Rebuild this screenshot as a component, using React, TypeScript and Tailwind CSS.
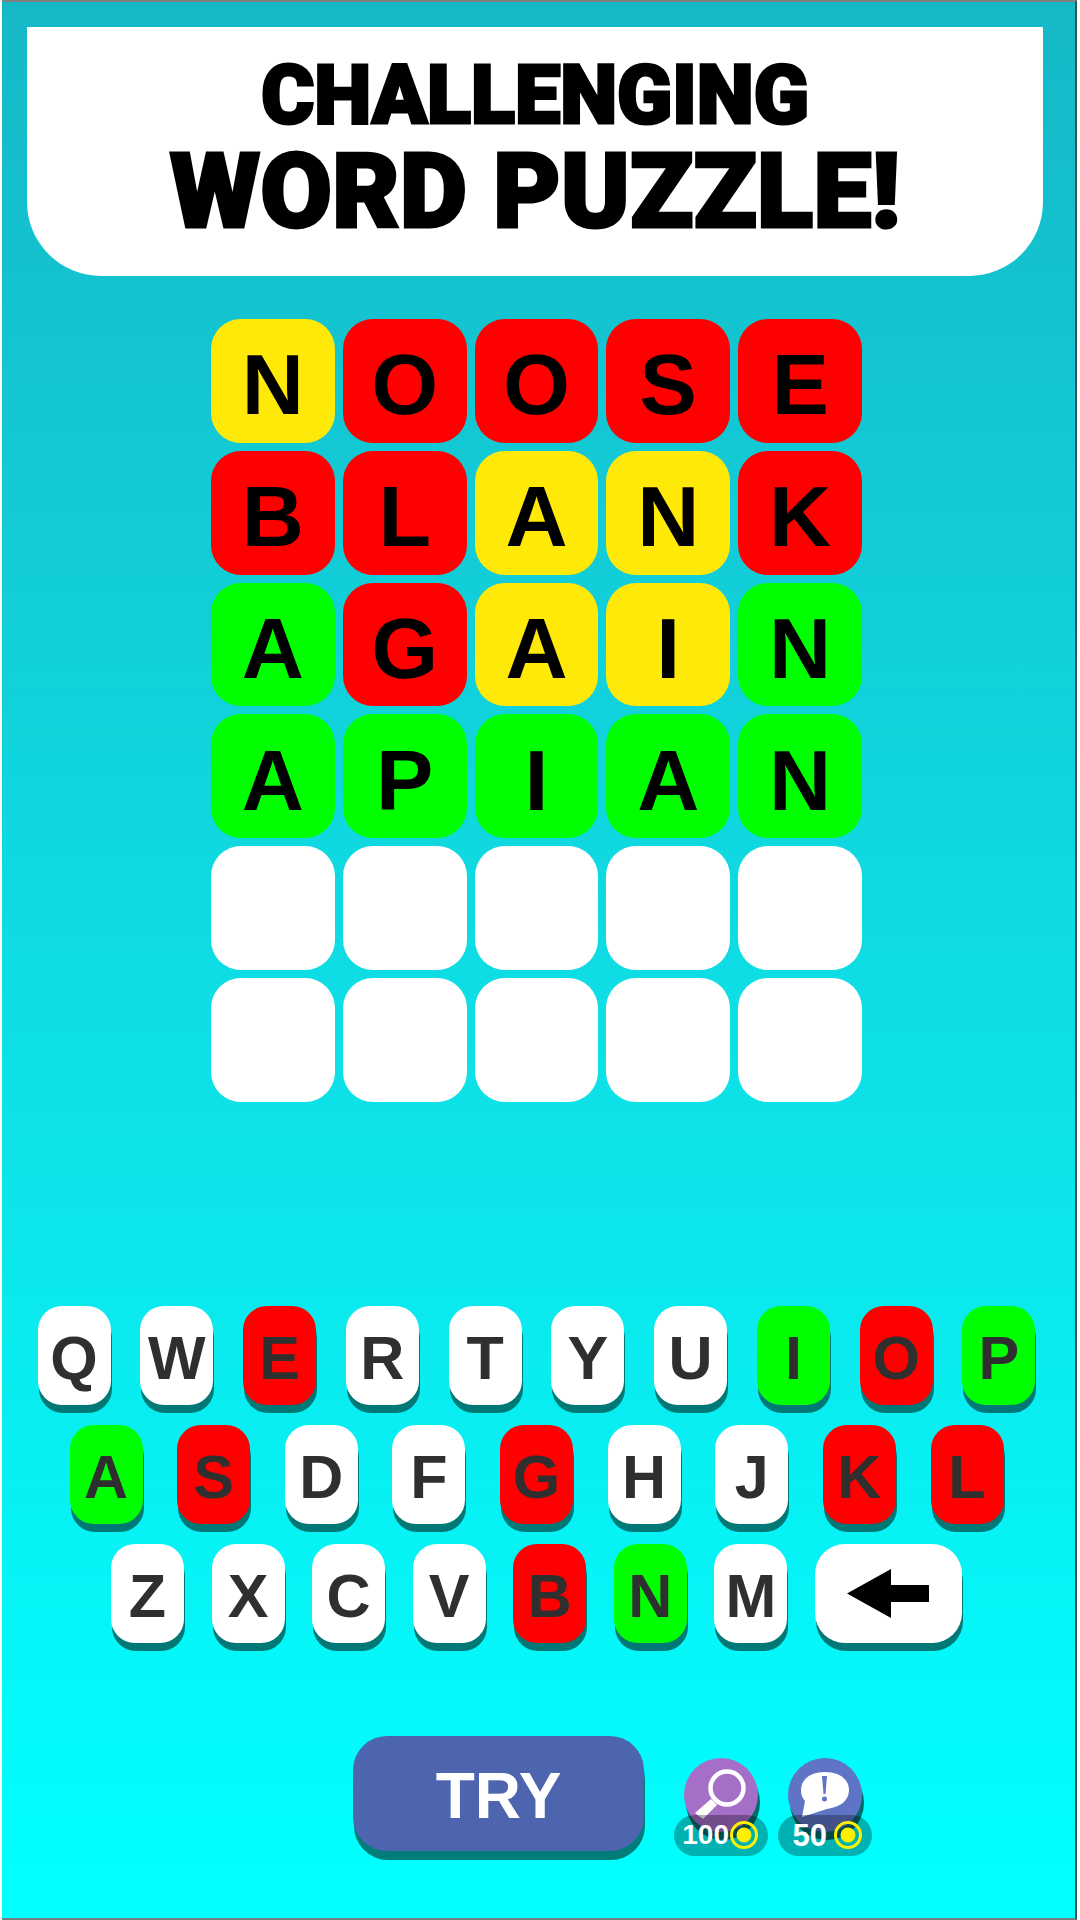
import React from "react";

type Tone = "white" | "red" | "green" | "yellow";

const TONES: Record<Tone, string> = {
  white: "bg-white",
  red: "bg-[#ff0000]",
  green: "bg-[#00ff00]",
  yellow: "bg-[#ffe909]",
};

const CODES: Record<string, Tone> = { r: "red", g: "green", y: "yellow", w: "white" };

const BOARD: [string, string][] = [
  ["NOOSE", "yrrrr"],
  ["BLANK", "rryyr"],
  ["AGAIN", "gryyg"],
  ["APIAN", "ggggg"],
  ["     ", "wwwww"],
  ["     ", "wwwww"],
];

function Tile({ letter, tone }: { letter: string; tone: Tone }) {
  return (
    <div
      className={`flex aspect-square items-center justify-center rounded-[30px] pt-[7px] text-[86px] leading-none font-bold text-black ${TONES[tone]}`}
    >
      {letter.trim()}
    </div>
  );
}

function Key({ letter, tone }: { letter: string; tone: Tone }) {
  return (
    <button
      type="button"
      className={`flex h-[99px] w-[73px] items-center justify-center rounded-[24px] pt-[7px] text-[61px] leading-none font-bold text-[#2f2f2f] shadow-[1px_8px_0_#007876] ${TONES[tone]}`}
    >
      {letter}
    </button>
  );
}

function Keys({ letters, tones }: { letters: string; tones: string }) {
  return (
    <>
      {letters.split("").map((l, i) => (
        <Key key={l} letter={l} tone={CODES[tones[i]]} />
      ))}
    </>
  );
}

function Coin() {
  return (
    <svg viewBox="0 0 30 30" className="h-[30px] w-[30px] shrink-0" aria-hidden="true">
      <circle cx="15" cy="15" r="12.5" fill="none" stroke="#fff000" strokeWidth="3" />
      <circle cx="15" cy="15" r="7.5" fill="#fff000" />
    </svg>
  );
}

function Hint({
  label,
  circle,
  price,
  priceClass,
  children,
}: {
  label: string;
  circle: string;
  price: string;
  priceClass: string;
  children: React.ReactNode;
}) {
  return (
    <button type="button" aria-label={label} className="flex w-[94px] flex-col items-center">
      <span
        className={`flex h-[74px] w-[74px] items-center justify-center rounded-full shadow-[2px_8px_0_#006b6b] ${circle}`}
      >
        {children}
      </span>
      <span className="relative -mt-[17px] flex h-[41px] w-full items-center justify-end rounded-full bg-black/30 pr-[9px]">
        <span className={`leading-none font-bold text-white ${priceClass}`}>{price}</span>
        <Coin />
      </span>
    </button>
  );
}

export default function App() {
  return (
    <div className="flex min-h-screen bg-white pr-[3px] pl-[2px]">
      <div className="min-w-0 flex-1 border-t-2 border-r-2 border-b-2 border-t-[#808080] border-r-[#2f5558] border-b-[#6f8080] bg-linear-to-b from-[#15b8c7] to-[#00ffff] to-97% font-['Liberation_Sans',Arial,sans-serif]">
        <header className="mt-[25px] mr-[32px] ml-[25px] flex h-[249px] flex-col items-center rounded-b-[74px] bg-white pt-[21px]">
          <h1 className="flex flex-col items-center font-['Roboto',sans-serif] font-black text-black">
            <span className="text-[81px] leading-[96px] [-webkit-text-stroke:3px_black]">CHALLENGING</span>
            <span className="text-[104px] leading-[96px] [-webkit-text-stroke:3px_black]">WORD PUZZLE!</span>
          </h1>
        </header>

        <main className="flex flex-col items-center pr-[4px]">
          <section aria-label="Board" className="mt-[43px] grid w-[651px] grid-cols-5 gap-2">
            {BOARD.map(([word, tones], r) =>
              word.split("").map((l, c) => <Tile key={`${r}-${c}`} letter={l} tone={CODES[tones[c]]} />),
            )}
          </section>

          <section aria-label="Keyboard" className="mt-[204px] flex w-full flex-col items-center gap-5">
            <div className="flex w-[998px] justify-between">
              <Keys letters="QWERTYUIOP" tones="wwrwwwwgrg" />
            </div>
            <div className="flex w-[934px] justify-between">
              <Keys letters="ASDFGHJKL" tones="grwwrwwrr" />
            </div>
            <div className="flex w-[851px] justify-between">
              <Keys letters="ZXCVBNM" tones="wwwwrgw" />
              <button
                type="button"
                aria-label="Backspace"
                className="flex h-[99px] w-[147px] items-center justify-center rounded-[30px] bg-white shadow-[1px_8px_0_#007876]"
              >
                <svg viewBox="0 0 82 49" className="h-[49px] w-[82px]" aria-hidden="true">
                  <path d="M0 24.500 44 0V16H82V33H44V49Z" fill="#000" />
                </svg>
              </button>
            </div>
          </section>

          <section aria-label="Actions" className="mt-[93px] flex items-start pl-[152px]">
            <button
              type="button"
              className="flex h-[115px] w-[291px] items-center justify-center rounded-[34px] bg-[#4d64ae] pt-[6px] text-[64px] leading-none font-bold text-white shadow-[1px_9px_0_#007d78]"
            >
              TRY
            </button>
            <div className="mt-[22px] ml-[30px] flex gap-[10px]">
              <Hint
                label="Reveal a letter, 100 coins"
                circle="bg-[#a56fc8]"
                price="100"
                priceClass="text-[28px]"
              >
                <svg viewBox="0 0 74 74" className="h-full w-full" aria-hidden="true">
                  <circle cx="43" cy="30" r="16.500" fill="none" stroke="#fff" strokeWidth="4.500" />
                  <path d="M27 41 33 47 19 61 11 55Z" fill="#fff" />
                </svg>
              </Hint>
              <Hint label="Get a hint, 50 coins" circle="bg-[#5f74c4]" price="50" priceClass="mr-[6px] text-[31px]">
                <svg viewBox="0 0 74 74" className="h-full w-full" aria-hidden="true">
                  <path
                    d="M37 14C51 14 61 21 61 32C61 43 52 49 39 51L14 59L17 43C14 40 13 36 13 32C13 21 23 14 37 14Z"
                    fill="#fff"
                  />
                  <path d="M34 18H39L37.500 36H35.500Z" fill="#5f74c4" />
                  <circle cx="36.500" cy="41" r="2.500" fill="#5f74c4" />
                </svg>
              </Hint>
            </div>
          </section>
        </main>
      </div>
    </div>
  );
}
